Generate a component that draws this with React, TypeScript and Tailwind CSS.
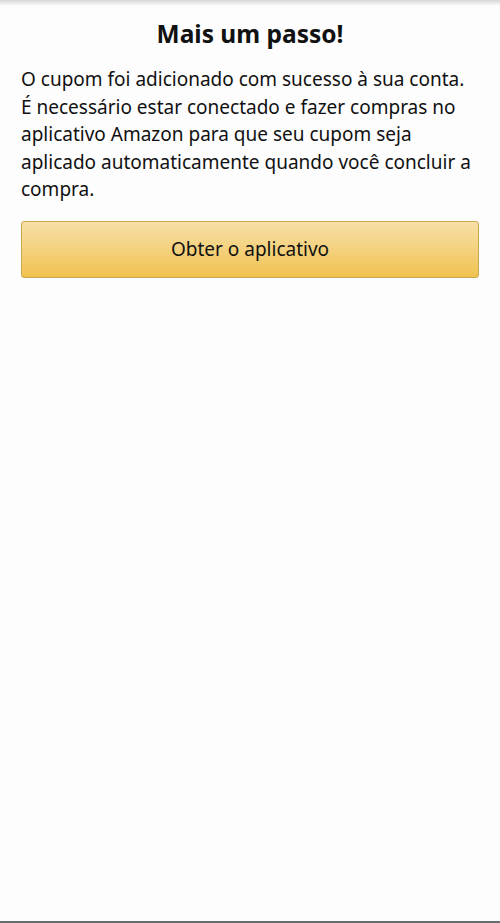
export default function App() {
  return (
    <div
      className="relative flex h-[923px] w-[500px] flex-col bg-[#fdfdfd] text-[#111]"
      style={{ fontFamily: '"Noto Sans", "Open Sans", sans-serif' }}
    >
      {/* sombra superior */}
      <div className="h-[6px] w-full bg-gradient-to-b from-[#d6d6d6] to-[#fdfdfd]" />
      <h1 className="mt-[12px] text-center text-[24.5px] font-bold leading-[32px]">Mais um passo!</h1>
      <p className="mx-[21px] mt-[16px] text-[19px] leading-[27.5px] text-[#111]">
        O cupom foi adicionado com sucesso à sua conta. É necessário estar conectado e fazer compras no
        aplicativo Amazon para que seu cupom seja aplicado automaticamente quando você concluir a compra.
      </p>
      <button className="mx-[21px] mt-[17px] h-[57px] rounded-[3px] border border-[#c9a84f] bg-gradient-to-b from-[#f7e0a6] to-[#f0c24c] text-[19px] text-[#111]">
        Obter o aplicativo
      </button>
      <div className="flex-1" />
      <div className="h-[2px] w-full bg-[#6b6b6b]" />
    </div>
  );
}
